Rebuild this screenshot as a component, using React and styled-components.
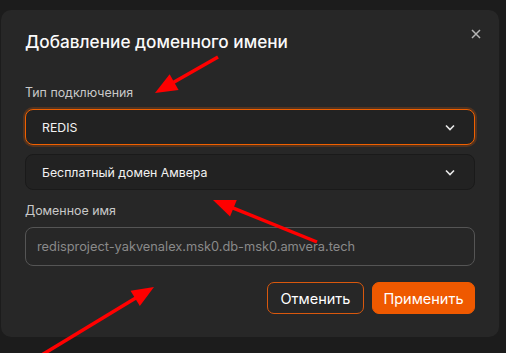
import styled, { createGlobalStyle } from 'styled-components';

const GlobalStyle = createGlobalStyle`
  html, body {
    margin: 0;
    padding: 0;
    background: #1c1c1c;
    font-family: Inter, 'Noto Sans', sans-serif;
  }
  * { box-sizing: border-box; }
`;

const Page = styled.div`
  position: relative;
  width: 506px;
  height: 353px;
  overflow: hidden;
  padding: 10px 7px 0 1px;
`;

const Modal = styled.div`
  position: relative;
  width: 498px;
  background: #272727;
  border-radius: 10px;
  padding: 20px 24px 23px;
  display: flex;
  flex-direction: column;
`;

const Title = styled.h2`
  margin: 0;
  font-size: 17.2px;
  line-height: 24px;
  font-weight: 500;
  color: #fafafa;
`;

const Close = styled.button`
  position: absolute;
  top: 18px;
  right: 17px;
  width: 12px;
  height: 12px;
  padding: 0;
  border: none;
  background: none;
  display: flex;
  align-items: center;
  justify-content: center;
`;

const Label = styled.div`
  font-size: 12.4px;
  line-height: 16px;
  color: #c9c9c9;
  margin-top: ${p => p.$top}px;
  margin-bottom: 8px;
`;

const Select = styled.div`
  height: 36px;
  margin-bottom: ${p => p.$gap || 0}px;
  border-radius: 8px;
  background: #222222;
  border: 1px solid ${p => (p.$focused ? '#f06000' : '#1a1a1a')};
  box-shadow: ${p => (p.$focused ? '0 0 0 2px rgba(240, 96, 0, 0.22)' : 'none')};
  display: flex;
  align-items: center;
  justify-content: space-between;
  padding: 0 19px 0 16px;
  font-size: 12.3px;
  color: #f2f2f2;
`;

const Input = styled.div`
  height: 39px;
  border-radius: 8px;
  border: 1px solid #555555;
  display: flex;
  align-items: center;
  padding: 0 11px;
  font-size: 12.8px;
  color: #8a8a8a;
`;

const Actions = styled.div`
  display: flex;
  justify-content: flex-end;
  gap: 8px;
  margin-top: 16px;
`;

const Button = styled.button`
  height: 32px;
  width: ${p => p.$w}px;
  border-radius: 7px;
  font-family: inherit;
  font-size: 14.5px;
  color: #ffffff;
  border: 1px solid #e8600c;
  background: ${p => (p.$primary ? '#ef5900' : 'transparent')};
  border-color: ${p => (p.$primary ? '#ef5900' : '#d9580d')};
`;

const Overlay = styled.svg`
  position: absolute;
  left: 0;
  top: 0;
  pointer-events: none;
`;

const Chevron = () => (
  <svg width="10" height="7" viewBox="0 0 10 7">
    <path d="M1 1.5l4 4 4-4" fill="none" stroke="#e8e8e8" strokeWidth="1.6" />
  </svg>
);

const Arrow = ({ x1, y1, x2, y2 }) => {
  const dx = x2 - x1;
  const dy = y2 - y1;
  const len = Math.hypot(dx, dy);
  const ux = dx / len;
  const uy = dy / len;
  const hl = 22;
  const hw = 9;
  const bx = x2 - ux * hl;
  const by = y2 - uy * hl;
  const pts = `${x2},${y2} ${bx - uy * hw},${by + ux * hw} ${bx + uy * hw},${by - ux * hw}`;
  return (
    <g>
      <line x1={x1} y1={y1} x2={bx + ux * 4} y2={by + uy * 4} stroke="#ff0000" strokeWidth="3.5" />
      <polygon points={pts} fill="#ff0000" />
    </g>
  );
};

export default function App() {
  return (
    <>
      <GlobalStyle />
      <Page>
        <Modal>
          <Title>Добавление доменного имени</Title>
          <Close>
            <svg width="10" height="10" viewBox="0 0 10 10">
              <path d="M1 1l8 8M9 1l-8 8" stroke="#b5b5b5" strokeWidth="1.5" />
            </svg>
          </Close>
          <Label $top={31}>Тип подключения</Label>
          <Select $focused $gap={9}>
            REDIS
            <Chevron />
          </Select>
          <Select>
            Бесплатный домен Амвера
            <Chevron />
          </Select>
          <Label $top={13}>Доменное имя</Label>
          <Input>redisproject-yakvenalex.msk0.db-msk0.amvera.tech</Input>
          <Actions>
            <Button $w={97}>Отменить</Button>
            <Button $w={103} $primary>Применить</Button>
          </Actions>
        </Modal>
        <Overlay width="506" height="353" viewBox="0 0 506 353">
          <Arrow x1={218} y1={57} x2={155} y2={93} />
          <Arrow x1={317} y1={242} x2={213} y2={200} />
          <Arrow x1={40} y1={356} x2={154} y2={287} />
        </Overlay>
      </Page>
    </>
  );
}
